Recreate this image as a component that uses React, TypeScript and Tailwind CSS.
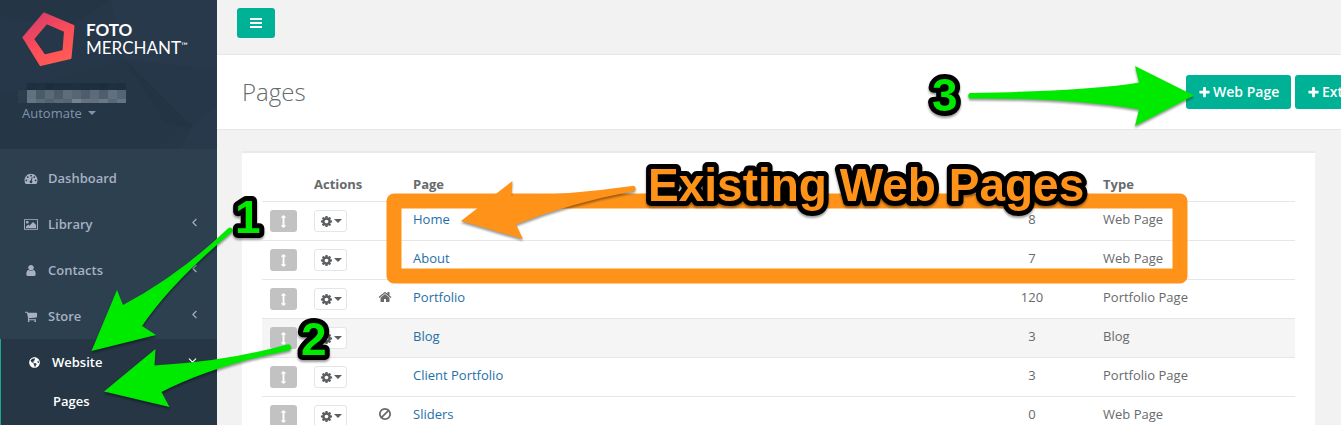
import type { ReactNode } from 'react';
import { FaGlobeAmericas } from 'react-icons/fa';
import { ChevronDown, ChevronLeft } from 'lucide-react';

const icons = {
  dashboard:
    'M384 1152q0-53-37.5-90.5t-90.5-37.5-90.5 37.5-37.5 90.5 37.5 90.5 90.5 37.5 90.5-37.5 37.5-90.5zm192-448q0-53-37.5-90.5t-90.5-37.5-90.5 37.5-37.5 90.5 37.5 90.5 90.5 37.5 90.5-37.5 37.5-90.5zm428 481l101-382q6-26-7.5-48.5t-38.5-29.5-48 6.5-30 39.5l-101 382q-60 5-107 43.5t-63 98.5q-20 77 20 146t117 89 146-20 89-117q16-60-6-117t-72-91zm660-33q0-53-37.5-90.5t-90.5-37.5-90.5 37.5-37.5 90.5 37.5 90.5 90.5 37.5 90.5-37.5 37.5-90.5zm-640-640q0-53-37.5-90.5t-90.5-37.5-90.5 37.5-37.5 90.5 37.5 90.5 90.5 37.5 90.5-37.5 37.5-90.5zm448 192q0-53-37.5-90.5t-90.5-37.5-90.5 37.5-37.5 90.5 37.5 90.5 90.5 37.5 90.5-37.5 37.5-90.5zm320 448q0 261-141 483-19 29-54 29h-1402q-35 0-54-29-141-221-141-483 0-182 71-348t191-286 286-191 348-71 348 71 286 191 191 286 71 348z',
  picture:
    'M576 576q0 80-56 136t-136 56-136-56-56-136 56-136 136-56 136 56 56 136zm1024 384v448h-1408v-192l320-320 160 160 512-512zm96-704h-1600q-13 0-22.5 9.5t-9.5 22.5v1216q0 13 9.5 22.5t22.5 9.5h1600q13 0 22.5-9.5t9.5-22.5v-1216q0-13-9.5-22.5t-22.5-9.5zm160 32v1216q0 66-47 113t-113 47h-1600q-66 0-113-47t-47-113v-1216q0-66 47-113t113-47h1600q66 0 113 47t47 113z',
  user: 'M1536 1399q0 109-62.5 187t-150.5 78h-854q-88 0-150.5-78t-62.5-187q0-85 8.5-160.5t31.5-152 58.5-131 94-89 134.5-34.5q131 128 313 128t313-128q76 0 134.5 34.5t94 89 58.5 131 31.5 152 8.5 160.5zm-256-887q0 159-112.5 271.5t-271.5 112.5-271.5-112.5-112.5-271.5 112.5-271.5 271.5-112.5 271.5 112.5 112.5 271.5z',
  cart: 'M704 1536q0 52-38 90t-90 38-90-38-38-90 38-90 90-38 90 38 38 90zm896 0q0 52-38 90t-90 38-90-38-38-90 38-90 90-38 90 38 38 90zm128-1088v512q0 24-16.5 42.5t-40.5 21.5l-1044 122q13 60 13 70 0 16-24 64h920q26 0 45 19t19 45-19 45-45 19h-1024q-26 0-45-19t-19-45q0-11 8-31.5t16-36 21.5-40 15.5-29.5l-177-823h-204q-26 0-45-19t-19-45 19-45 45-19h256q16 0 28.5 6.5t19.5 15.5 13 24.5 8 26 5.5 29.5 4.5 26h1201q26 0 45 19t19 45z',
  cog: 'M1152 896q0-106-75-181t-181-75-181 75-75 181 75 181 181 75 181-75 75-181zm512-109v222q0 12-8 23t-20 13l-185 28q-19 54-39 91 35 50 107 138 10 12 10 25t-9 23q-27 37-99 108t-94 71q-12 0-26-9l-138-108q-44 23-91 38-16 136-29 186-7 28-36 28h-222q-14 0-24.5-8.5t-11.5-21.5l-28-184q-49-16-90-37l-141 107q-10 9-25 9-14 0-25-11-126-114-165-168-7-10-7-23 0-12 8-23 15-21 51-66.5t54-70.5q-27-50-41-99l-183-27q-13-2-21-12.5t-8-23.5v-222q0-12 8-23t19-13l186-28q14-46 39-92-40-57-107-138-10-12-10-24 0-10 9-23 26-36 98.5-107.5t94.5-71.5q13 0 26 10l138 107q44-23 91-38 16-136 29-186 7-28 36-28h222q14 0 24.5 8.5t11.5 21.5l28 184q49 16 90 37l142-107q9-9 24-9 13 0 25 10 129 119 165 170 7 8 7 22 0 12-8 23-15 21-51 66.5t-54 70.5q26 50 41 98l183 28q13 2 21 12.5t8 23.5z',
  home: 'M1472 992v480q0 26-19 45t-45 19h-384v-384h-256v384h-384q-26 0-45-19t-19-45v-480q0-1 .5-3t.5-3l575-474 575 474q1 2 1 6zm223-69l-62 74q-8 9-21 11h-3q-13 0-21-7l-692-577-692 577q-12 8-24 7-13-2-21-11l-62-74q-8-10-7-23.5t11-21.5l719-599q32-26 76-26t76 26l244 204v-195q0-14 9-23t23-9h192q14 0 23 9t9 23v408l219 182q10 8 11 21.5t-7 23.5z',
  ban: 'M1440 893q0-161-87-295l-754 753q137 89 297 89 111 0 211.5-43.5t173.5-116.5 116-174.5 43-212.5zm-999 299l755-754q-135-91-300-91-148 0-273 73t-198 199-73 274q0 162 89 299zm1223-299q0 157-61 300t-163.5 246-245 164-298.5 61-298.5-61-245-164-163.5-246-61-300 61-299.5 163.5-245.5 245-164 298.5-61 298.5 61 245 164 163.5 245.5 61 299.5z',
  move: 'M1216 320q0 26-19 45t-45 19h-128v1024h128q26 0 45 19t19 45-19 45l-256 256q-19 19-45 19t-45-19l-256-256q-19-19-19-45t19-45 45-19h128v-1024h-128q-26 0-45-19t-19-45 19-45l256-256q19-19 45-19t45 19l256 256q19 19 19 45z',
  plus: 'M1600 736v192q0 40-28 68t-68 28h-416v416q0 40-28 68t-68 28h-192q-40 0-68-28t-28-68v-416h-416q-40 0-68-28t-28-68v-192q0-40 28-68t68-28h416v-416q0-40 28-68t68-28h192q40 0 68 28t28 68v416h416q40 0 68 28t28 68z',
};

type IconName = keyof typeof icons;

function Icon({ name, className = 'w-[13px] h-[13px]' }: { name: IconName; className?: string }) {
  const viewBox = name === 'picture' ? '-64 0 1920 1792' : '0 0 1792 1792';
  return (
    <svg className={`shrink-0 ${className}`} viewBox={viewBox} fill="currentColor" aria-hidden="true">
      <path d={icons[name]} />
    </svg>
  );
}

function Caret() {
  return (
    <svg className="w-2 h-1 shrink-0" viewBox="0 0 8 4" fill="currentColor" aria-hidden="true">
      <path d="M0 0h8L4 4z" />
    </svg>
  );
}

const maskedTop = ['#1e2f3f', '#1f303f', '#1c2d3d', '#1e2f3e', '#1d2e3e', '#1f3040', '#1d2e3d', '#1e2f3f', '#1c2d3c', '#1f303f', '#1e2f3e'];
const maskedMid = ['#60717f', '#4a5a69', '#5b6977', '#4b5b6a', '#5f6d7b', '#576675', '#4d5d6c', '#5d6a79', '#4f5e6d', '#61707f', '#566574'];
const maskedLow = ['#647583', '#5b6a79', '#52616f', '#5a6878', '#566474', '#74818e', '#66727f', '#63707e', '#6b7887', '#596877', '#657484'];

function Profile() {
  return (
    <div className="relative h-[149px] bg-[#253748]">
      <svg className="absolute inset-0 w-full h-full" viewBox="0 0 217 149" preserveAspectRatio="none" aria-hidden="true">
        <path d="M0 0H110L70 25 0 18z" fill="#243546" />
        <path d="M110 0H217V70L125 60z" fill="#27394a" />
        <path d="M125 60L192 127 150 149H0V95z" fill="#253647" />
        <path d="M125 60L192 127 165 123z" fill="#233444" />
        <path d="M192 127L217 105V149H180z" fill="#28394b" />
      </svg>
      <div className="relative pl-[22px] pt-3">
        <a href="#" className="flex gap-[11px]">
          <svg className="w-[53px] h-[54px]" viewBox="22 12 53 54" aria-hidden="true">
            <defs>
              <linearGradient id="mark" x1="0" y1="0" x2="0.6" y2="1">
                <stop offset="0" stopColor="#cf3a6e" />
                <stop offset="0.6" stopColor="#fb4d59" />
                <stop offset="1" stopColor="#ff5a55" />
              </linearGradient>
            </defs>
            <path
              d="M44 13.5L73.500 26 70.500 58 40.500 65 23.500 37.500zM46.500 23L33 39 44.500 55.500 63.500 51 65 31z"
              fill="url(#mark)"
              fillRule="evenodd"
              stroke="url(#mark)"
              strokeWidth="2"
              strokeLinejoin="round"
            />
          </svg>
          <div className="pt-[9px] font-['Lato',sans-serif] text-[17px] leading-[18px] text-white">
            <div className="font-bold">FOTO</div>
            <div className="flex items-start">
              MERCHANT<span className="text-[9px] leading-[14px]">™</span>
            </div>
          </div>
        </a>
        <svg className="-ml-1 mt-[17px] w-[108px] h-5" viewBox="0 0 108 20" shapeRendering="crispEdges" aria-hidden="true">
          <rect y="7" width="9" height="13" fill="#2c3e4d" />
          {maskedTop.map((c, i) => (
            <rect key={i} x={9 + i * 9} width="9" height="7" fill={c} />
          ))}
          {maskedMid.map((c, i) => (
            <rect key={i} x={9 + i * 9} y="7" width="9" height="9" fill={c} />
          ))}
          {maskedLow.map((c, i) => (
            <rect key={i} x={9 + i * 9} y="16" width="9" height="4" fill={c} />
          ))}
        </svg>
        <button className="flex items-center gap-[6px] text-[#8095a8]">
          Automate <Caret />
        </button>
      </div>
    </div>
  );
}

const navItems: { label: string; icon: IconName; expandable: boolean }[] = [
  { label: 'Dashboard', icon: 'dashboard', expandable: false },
  { label: 'Library', icon: 'picture', expandable: true },
  { label: 'Contacts', icon: 'user', expandable: true },
  { label: 'Store', icon: 'cart', expandable: true },
];

function Sidebar() {
  return (
    <aside className="flex w-[217px] shrink-0 flex-col bg-[#2c4050]">
      <Profile />
      <nav className="flex flex-1 flex-col pt-[6px] font-semibold text-[#a7b1c2]">
        {navItems.map((item) => (
          <a key={item.label} href="#" className="flex h-[46px] shrink-0 items-center pl-6 pr-4">
            <span className="flex w-6">
              <Icon name={item.icon} className="w-[14px] h-[13px]" />
            </span>
            {item.label}
            {item.expandable && <ChevronLeft className="ml-auto mb-1 w-[13px] h-[13px]" strokeWidth={2} />}
          </a>
        ))}
        <div className="flex-1 border-l border-[#19aa8d] bg-[#263645] text-white">
          <a href="#" className="flex h-[46px] items-center pl-7 pr-[18px]">
            <span className="flex w-[23px]">
              <FaGlobeAmericas className="w-[11px] h-[11px]" />
            </span>
            Website
            <ChevronDown className="ml-auto mb-1 w-[13px] h-[13px]" strokeWidth={2} />
          </a>
          <a href="#" className="block pl-[52px] pt-[7px] pb-2 leading-[18px]">
            Pages
          </a>
        </div>
      </nav>
    </aside>
  );
}

function PrimaryButton({ children, className = '' }: { children: ReactNode; className?: string }) {
  return (
    <button
      className={`flex h-[34px] shrink-0 items-center gap-[2px] rounded-[3px] bg-[#00b295] pl-3 text-sm font-semibold text-white ${className}`}
    >
      <Icon name="plus" />
      {children}
    </button>
  );
}

type PageRow = { name: string; count: number; type: string; marker?: IconName; hovered?: boolean };

const pages: PageRow[] = [
  { name: 'Home', count: 8, type: 'Web Page' },
  { name: 'About', count: 7, type: 'Web Page' },
  { name: 'Portfolio', count: 120, type: 'Portfolio Page', marker: 'home' },
  { name: 'Blog', count: 3, type: 'Blog', hovered: true },
  { name: 'Client Portfolio', count: 3, type: 'Portfolio Page' },
  { name: 'Sliders', count: 0, type: 'Web Page', marker: 'ban' },
];

function PagesTable() {
  return (
    <table className="w-full table-fixed text-left leading-[18px]">
      <colgroup>
        <col className="w-[44px]" />
        <col className="w-[59px]" />
        <col className="w-10" />
        <col />
        <col className="w-[126px]" />
        <col className="w-[200px]" />
      </colgroup>
      <thead>
        <tr className="font-bold">
          <td />
          <th className="whitespace-nowrap p-2">Actions</th>
          <td />
          <th className="p-2">Page</th>
          <td />
          <th className="p-2">Type</th>
        </tr>
      </thead>
      <tbody>
        {pages.map((page) => (
          <tr key={page.name} className={`border-t border-[#e4e6e7] align-top ${page.hovered ? 'bg-[#f5f5f5]' : ''}`}>
            <td className="p-2">
              <button aria-label="Move" className="flex h-[22px] w-[27px] items-center justify-center rounded-[3px] bg-[#c2c2c2] text-white">
                <Icon name="move" />
              </button>
            </td>
            <td className="p-2">
              <button
                aria-label="Page actions"
                className="flex h-[22px] w-[33px] items-center justify-center gap-px rounded-[3px] border border-[#e3e5e6] bg-white text-[#5c5f61]"
              >
                <Icon name="cog" />
                <Caret />
              </button>
            </td>
            <td className="py-[10px]">{page.marker && <Icon name={page.marker} className="mx-auto w-[14px] h-[14px]" />}</td>
            <td className="p-2">
              <a href="#" className="text-[#1f6fa8]">
                {page.name}
              </a>
            </td>
            <td className="p-2 text-center">{page.count}</td>
            <td className="p-2">{page.type}</td>
          </tr>
        ))}
      </tbody>
    </table>
  );
}

function Annotations() {
  return (
    <svg
      className="pointer-events-none absolute left-0 top-0 w-[1341px] h-[425px]"
      viewBox="0 0 1341 425"
    >
      <rect x="394" y="201" width="786" height="75" fill="none" stroke="#ff931a" strokeWidth="15" strokeLinejoin="round" />
      <g className="drop-shadow-[0_2px_1px_rgb(0_0_0/0.4)]">
        <path
          fill="#ff931a"
          d="M461 221L512.500 181 511.500 196Q572 194.500 632 186A2.500 2.500 0 0 1 634 191Q570 203 516 224.500L523 239z"
        />
        <g fill="#00ea00">
          <path d="M91.500 351L117 290 123 305Q178 276 228 228.500A2.500 2.500 0 0 1 232 232Q172 282 142 326L156 335z" />
          <path d="M104 391.500L155.500 349 154.500 365.500Q225 362 287 344.500A3 3 0 0 1 289 350.500Q215 365 161.500 392L169.500 407z" />
          <path d="M1194 95.500L1135 66 1139 82.500Q1090 91 970 93A3 3 0 0 0 970 98.500Q1070 98 1139 109.500L1135 126z" />
        </g>
      </g>
      <g
        className="drop-shadow-[0_2px_1px_rgb(0_0_0/0.4)]"
        fontFamily="'Liberation Sans', Arial, sans-serif"
        fontSize="46"
        fontWeight="700"
        stroke="#000"
        strokeWidth="10"
        strokeLinejoin="round"
        paintOrder="stroke"
      >
        <text x="648" y="201" fill="#ff931a">
          Existing Web Pages
        </text>
        <g fill="#00ea00">
          <text x="235" y="233">1</text>
          <text x="301" y="355">2</text>
          <text x="932" y="111">3</text>
        </g>
      </g>
    </svg>
  );
}

function App() {
  return (
    <div className="relative flex h-screen overflow-hidden bg-[#f2f2f2] font-['Open_Sans',sans-serif] text-[13px] leading-5 text-[#676a6c]">
      <Sidebar />
      <div className="min-w-0 flex-1">
        <div className="border-b border-[#e4e6e7] pl-5 pt-2 pb-4">
          <button aria-label="Toggle menu" className="flex h-[30px] w-[38px] items-center justify-center rounded-[3px] bg-[#00b295] text-white">
            <svg className="w-3 h-[10px]" viewBox="0 0 12 10" fill="currentColor" aria-hidden="true">
              <path d="M0 0h12v2H0zM0 4h12v2H0zM0 8h12v2H0z" />
            </svg>
          </button>
        </div>
        <header className="flex h-[75px] items-center justify-between border-b border-[#e4e6e7] bg-white pl-[25px]">
          <h1 className="text-2xl font-light">Pages</h1>
          <div className="flex w-[155px] gap-1">
            <PrimaryButton className="w-[105px]">Web Page</PrimaryButton>
            <PrimaryButton className="w-20">Ext</PrimaryButton>
          </div>
        </header>
        <main className="px-[25px] pt-[21px]">
          <div className="border-t-2 border-[#e7eaec] bg-white px-5 pt-[14px] pb-5 mr-px">
            <PagesTable />
          </div>
        </main>
      </div>
      <Annotations />
    </div>
  );
}

export default App;
